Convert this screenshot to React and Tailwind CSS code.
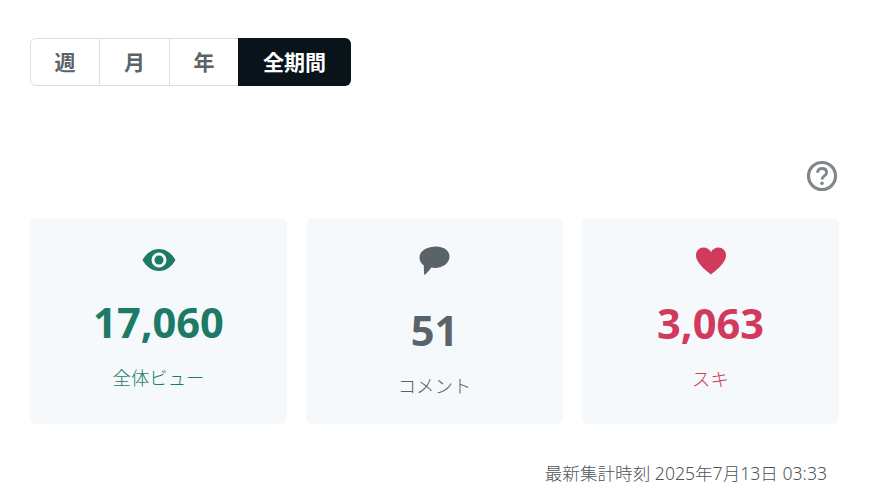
const font = "font-['Noto_Sans','Noto_Sans_CJK_JP',sans-serif]"

function EyeIcon() {
  return (
    <svg width="34" height="24" viewBox="0 0 34 24" className="block">
      <path fillRule="evenodd" fill="#1d7a66" d="M0.5 12C4 5.5 10 1 17 1s13 4.5 16.5 11C30 18.500 24 23 17 23S4 18.500 0.500 12ZM17 4.500a7.500 7.500 0 1 0 0 15a7.500 7.500 0 0 0 0-15Z" />
      <circle cx="17" cy="12" r="4.500" fill="#1d7a66" />
    </svg>
  )
}

function CommentIcon() {
  return (
    <svg width="31" height="30" viewBox="0 0 31 30" className="block">
      <path fill="#5a6368" d="M17 .5C24.500 .5 30.500 4.500 30.500 10.500C30.500 17 24 22 16 22c-1.500 0-2.500-.1-3.700-.4c-1.800 2.700-4 4.900-5.800 6.700c-.8.700-1.500.3-1.500-.7l-.2-8.100C2 17.500.5 14.500.5 11.200C.5 4.800 8.500 .5 17 .5Z" />
    </svg>
  )
}

function HeartIcon() {
  return (
    <svg width="32" height="28" viewBox="0 0 32 28" className="block">
      <path fill="#d13a5c" d="M16 27.500C14.500 26 1 17 1 8.500C1 3.500 4.500.5 8.500.5c3.200 0 5.800 1.600 7.500 4.500C17.700 2.100 20.300.5 23.500.5C27.500.5 31 3.500 31 8.500C31 17 17.500 26 16 27.500Z" />
    </svg>
  )
}

function HelpIcon() {
  return (
    <svg width="32" height="32" viewBox="0 0 32 32" className="block">
      <circle cx="16" cy="16" r="13.500" fill="none" stroke="#7f878b" strokeWidth="3.200" />
      <path d="M11.500 12.800c0-2.700 2-4.300 4.600-4.300s4.500 1.500 4.500 3.900c0 3.500-4.600 3.600-4.600 7.200" fill="none" stroke="#7f878b" strokeWidth="2.800" />
      <circle cx="16" cy="23.300" r="1.800" fill="#7f878b" />
    </svg>
  )
}

const cards = [
  { icon: <EyeIcon />, value: '17,060', label: '全体ビュー', color: 'text-[#1d7a66]', top: 'pt-[30px]', gap: 'mt-[23px]', labelGap: 'mt-[16px]' },
  { icon: <CommentIcon />, value: '51', label: 'コメント', color: 'text-[#5a6368]', top: 'pt-[28px]', gap: 'mt-[27px]', labelGap: 'mt-[16px]' },
  { icon: <HeartIcon />, value: '3,063', label: 'スキ', color: 'text-[#d13a5c]', top: 'pt-[29px]', gap: 'mt-[21px]', labelGap: 'mt-[16px]' },
]

export default function App() {
  return (
    <div className={`${font} w-[869px] h-[490px] overflow-hidden bg-white px-[30px] pt-[38px]`}>
      <div className="flex w-fit h-[48px] text-[21px] font-bold">
        <div className="flex w-[70px] items-center justify-center rounded-l-md border border-[#dcdfe1] pt-[1px] text-[#5a6368]">週</div>
        <div className="flex w-[70px] items-center justify-center border-y border-r border-[#dcdfe1] pt-[1px] text-[#5a6368]">月</div>
        <div className="flex w-[68px] items-center justify-center border-y border-[#dcdfe1] pt-[1px] text-[#5a6368]">年</div>
        <div className="flex w-[113px] items-center justify-center rounded-r-md bg-[#08131a] pt-[1px] text-white">全期間</div>
      </div>

      <div className="mt-[74px] flex justify-end pr-[1.5px]">
        <HelpIcon />
      </div>

      <div className="mt-[26px] grid grid-cols-3 gap-[19px]">
        {cards.map((c) => (
          <div key={c.label} className={`flex h-[206px] flex-col items-center rounded-md bg-[#f5f9fc] ${c.top} ${c.color}`}>
            {c.icon}
            <div className={`${c.gap} text-[41.6px] leading-[54px] font-bold`}>{c.value}</div>
            <div className={`${c.labelGap} text-[18.4px] leading-[26px] font-light`}>{c.label}</div>
          </div>
        ))}
      </div>

      <div className="mt-[36px] pr-[12px] text-right text-[17.6px] leading-[26px] font-light text-[#4d5559]">最新集計時刻 2025年7月13日 03:33</div>
    </div>
  )
}
